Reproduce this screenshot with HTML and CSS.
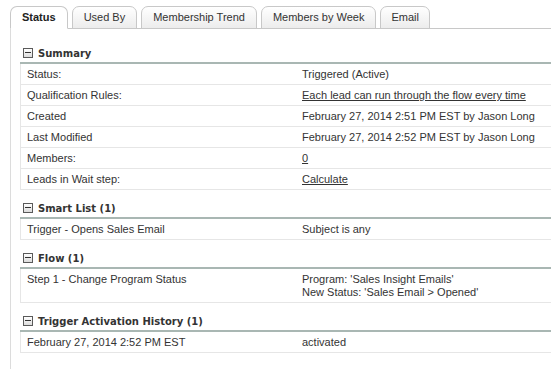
FILE: index.html
```html
<!DOCTYPE html>
<html lang="en">
<head>
  <meta charset="UTF-8">
  <meta name="viewport" content="width=device-width, initial-scale=1.0">
  <title>Smart Campaign Status</title>
  <link rel="stylesheet" href="styles.css">
</head>
<body>
  <div class="page">
    <div class="tabs">
      <div class="tab active">Status</div>
      <div class="tab">Used By</div>
      <div class="tab">Membership Trend</div>
      <div class="tab">Members by Week</div>
      <div class="tab">Email</div>
    </div>

    <div class="panel">
      <div class="section">
        <div class="section-title"><span class="toggle"></span>Summary</div>
        <div class="row"><div class="cell">Status:</div><div class="cell">Triggered (Active)</div></div>
        <div class="row"><div class="cell">Qualification Rules:</div><div class="cell"><a href="#">Each lead can run through the flow every time</a></div></div>
        <div class="row"><div class="cell">Created</div><div class="cell">February 27, 2014 2:51 PM EST by Jason Long</div></div>
        <div class="row"><div class="cell">Last Modified</div><div class="cell">February 27, 2014 2:52 PM EST by Jason Long</div></div>
        <div class="row"><div class="cell">Members:</div><div class="cell"><a href="#">0</a></div></div>
        <div class="row"><div class="cell">Leads in Wait step:</div><div class="cell"><a href="#">Calculate</a></div></div>
      </div>

      <div class="section">
        <div class="section-title"><span class="toggle"></span>Smart List (1)</div>
        <div class="row"><div class="cell">Trigger - Opens Sales Email</div><div class="cell">Subject is any</div></div>
      </div>

      <div class="section">
        <div class="section-title"><span class="toggle"></span>Flow (1)</div>
        <div class="row"><div class="cell">Step 1 - Change Program Status</div><div class="cell">Program: 'Sales Insight Emails'<br>New Status: 'Sales Email &gt; Opened'</div></div>
      </div>

      <div class="section">
        <div class="section-title"><span class="toggle"></span>Trigger Activation History (1)</div>
        <div class="row"><div class="cell">February 27, 2014 2:52 PM EST</div><div class="cell">activated</div></div>
      </div>
    </div>
  </div>
</body>
</html>
```

FILE: styles.css
```css
body {
  margin: 0;
  font-family: 'Liberation Sans', Arial, sans-serif;
  font-size: 11px;
  color: #333;
  background-color: #fff;
}

.page {
  margin-left: 10px;
}

.tabs {
  display: flex;
  gap: 4px;
  padding-top: 6px;
  border-bottom: 1px solid #c8c8c8;
}

.tab {
  box-sizing: border-box;
  height: 23px;
  line-height: 21px;
  padding: 0 11px;
  margin-bottom: -1px;
  border: 1px solid #c8c8c8;
  border-radius: 7px 7px 0 0;
  background-image: linear-gradient(#ffffff, #ececec);
  color: #333;
  font-size: 11px;
}

.tab.active {
  font-weight: bold;
  color: #222;
  background: #fff;
  border-bottom-color: #fff;
}

.tab:last-child {
  padding: 0 10px;
}

.panel {
  border-left: 1px solid #dcdcdc;
  padding: 6px 0 16px 9px;
}

.section {
  margin-top: 9px;
}

.section-title {
  display: flex;
  align-items: center;
  gap: 5px;
  height: 18px;
  padding-left: 3px;
  border-bottom: 2px solid #a9b7b3;
  font-family: 'DejaVu Sans', Verdana, sans-serif;
  font-size: 10px;
  font-weight: bold;
  color: #333;
}

.toggle {
  position: relative;
  box-sizing: border-box;
  width: 10px;
  height: 10px;
  border: 1px solid #5a5a5a;
  background-image: linear-gradient(#ffffff, #dcdcdc);
}

.toggle::after {
  content: "";
  position: absolute;
  left: 1px;
  right: 1px;
  top: 3px;
  height: 1px;
  background-color: #333;
}

.row {
  display: grid;
  grid-template-columns: 275px 1fr;
  border-left: 1px solid #e6e6e6;
  border-bottom: 1px solid #e6e6e6;
}

.cell {
  padding: 4px 6px 3px;
  line-height: 13px;
  white-space: nowrap;
}

.cell a {
  color: #333;
  text-decoration: underline;
}
```
